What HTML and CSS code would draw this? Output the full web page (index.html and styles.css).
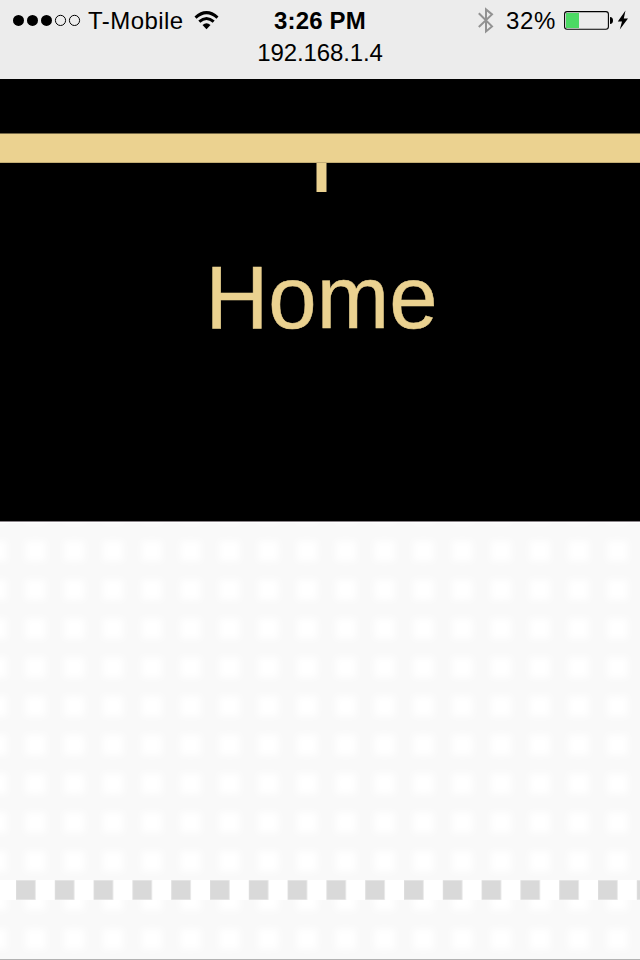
FILE: index.html
```
<!DOCTYPE html>
<html lang="en">
<head>
<meta charset="utf-8">
<meta name="viewport" content="width=640">
<title>Home</title>
<link rel="stylesheet" href="styles.css">
</head>
<body>
<header class="status">
  <div class="status-row">
    <div class="carrier">
      <svg class="signal" width="68" height="14" viewBox="0 0 68 14">
        <circle cx="5.5" cy="7.4" r="5.5"/><circle cx="19.5" cy="7.4" r="5.5"/><circle cx="33.5" cy="7.4" r="5.5"/>
        <g fill="none" stroke="#000"><circle cx="47.5" cy="7.4" r="5.1"/><circle cx="61.5" cy="7.4" r="5.1"/></g>
      </svg>
      <span class="carrier-name">T-Mobile</span>
      <svg class="wifi" width="26" height="20" viewBox="0 0 26 20">
        <g fill="none" stroke="#000" stroke-width="3"><path d="M1.5 7.6Q12.5-2.4 23.5 7.6"/><path d="M5.3 11.7Q12.5 5.4 19.7 11.7"/></g>
        <path d="M8.5 15Q12.5 11.4 16.5 15L12.5 19.3Z"/>
      </svg>
    </div>
    <span class="time">3:26 PM</span>
    <div class="power">
      <svg class="bluetooth" width="16" height="28" viewBox="0 0 16 28">
        <path d="M.8 7.2L14 20.4L8 25.4V3.4L14 8.4L.8 21" fill="none" stroke="#929292" stroke-width="2"/>
      </svg>
      <span class="percent">32%</span>
      <svg class="battery" width="65" height="20" viewBox="0 0 65 20">
        <rect x=".6" y="1.6" width="43.8" height="17.6" rx="2.5" fill="none" stroke="#000" stroke-width="1.1"/>
        <rect x="2" y="3" width="13" height="15" fill="#4cd964"/>
        <path d="M46 7.1Q49 7.5 49 10.4Q49 13.5 46 13.9Z"/>
        <path d="M61.5 .6L53.8 11.4H58L55.8 19.5L64 8.6H59.8Z"/>
      </svg>
    </div>
  </div>
  <div class="address">192.168.1.4</div>
</header>
<main>
  <nav class="menu">
    <div class="bar"></div>
    <div class="tick"></div>
    <a class="menu-link">Home</a>
  </nav>
  <section class="texture">
    <svg width="640" height="438" viewBox="0 522 640 438">
      <defs>
        <filter id="soft" x="-50%" y="-50%" width="200%" height="200%" color-interpolation-filters="sRGB"><feGaussianBlur stdDeviation="3"/></filter>
        <pattern id="dots" x="16.1" y="531.6" width="38.8" height="38.8" patternUnits="userSpaceOnUse">
          <rect x="9.4" y="9.4" width="20" height="20" fill="#fff" filter="url(#soft)"/>
        </pattern>
        <pattern id="squares" x="16" y="880" width="38.8" height="40" patternUnits="userSpaceOnUse">
          <rect width="19.6" height="20" fill="#e4e4e4"/>
          <rect x=".4" y="1" width="18.6" height="18" fill="#d9d9d9"/>
        </pattern>
      </defs>
      <rect y="522" width="640" height="438" fill="#f9f9f9"/>
      <rect y="522" width="640" height="438" fill="url(#dots)"/>
      <rect y="522" width="640" height="1" fill="#fff"/>
      <rect y="880" width="640" height="20" fill="#fff"/>
      <rect y="880" width="640" height="20" fill="url(#squares)"/>
      <rect y="959" width="640" height="1" fill="#b2b2b2"/>
    </svg>
  </section>
</main>
</body>
</html>
```
FILE: styles.css
```
body {
  margin: 0;
  width: 640px;
  height: 960px;
  overflow: hidden;
  background: #f9f9f9;
  font-family: "Liberation Sans", Arial, sans-serif;
}
svg { display: block; flex: none; }
.status {
  box-sizing: border-box;
  height: 79px;
  background: #ececec;
  color: #000;
  font-size: 24px;
  line-height: 32px;
  white-space: nowrap;
}
.status-row {
  display: grid;
  grid-template-columns: 240px 160px 240px;
  height: 37px;
  padding-top: 1px;
  box-sizing: border-box;
}
.carrier, .power { display: flex; align-items: center; height: 38px; }
.carrier { padding-left: 13px; }
.carrier-name { width: 97px; margin: 2px 9px 0 7px; letter-spacing: .45px; }
.wifi { margin-bottom: 0; }
.time { line-height: 40px; font-weight: bold; font-size: 24px; letter-spacing: .15px; text-align: center; }
.power { padding-left: 78px; }
.percent { width: 50px; margin: 2px 8px 0 12px; letter-spacing: .6px; }
.address { text-align: center; letter-spacing: -.1px; }
.menu {
  box-sizing: border-box;
  height: 443px;
  padding-top: 54px;
  background: #000;
  border-bottom: 1px solid #8b858a;
}
.bar {
  box-sizing: border-box;
  height: 30px;
  background: #ebd290;
  border-top: 1px solid #756948;
  border-bottom: 1px solid #c3ad75;
}
.tick {
  box-sizing: border-box;
  width: 11px;
  height: 29px;
  margin-left: 316px;
  background: #ebd290;
  border: solid #76694a;
  border-width: 0 1px;
}
.menu-link {
  display: block;
  margin-top: 55px;
  padding-left: 3px;
  color: #ebd290;
  font-size: 87px;
  line-height: 100px;
  text-align: center;
  transform: scaleY(1.03);
  -webkit-text-stroke: .5px #ebd290;
}
```
